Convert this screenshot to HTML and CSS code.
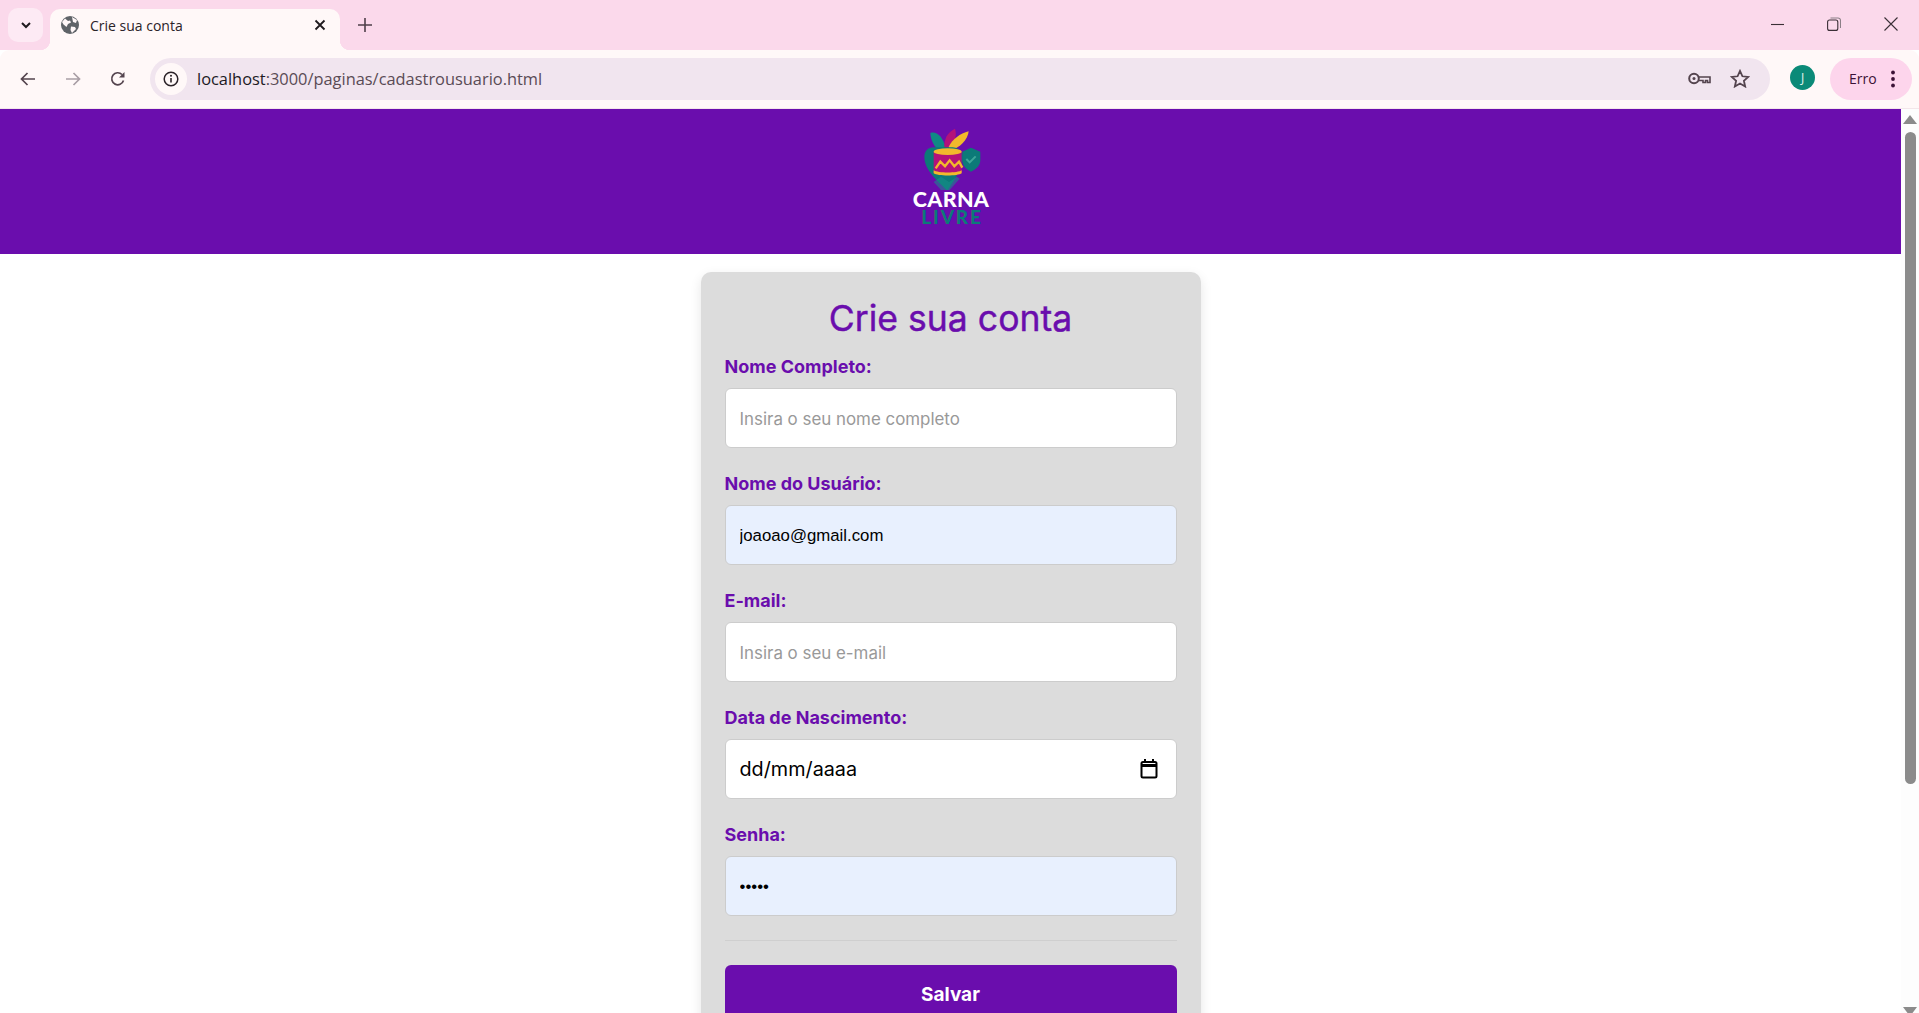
FILE: index.html
```html
<!DOCTYPE html>
<html lang="pt-BR">
<head>
<meta charset="utf-8">
<title>Crie sua conta</title>
<link rel="stylesheet" href="styles.css">
</head>
<body>
<div class="browser">
  <div class="tabstrip">
    <button class="tabsearch"><svg width="12" height="12" viewBox="0 0 12 12"><path d="M2 4l4 4 4-4" fill="none" stroke="#1f1a1e" stroke-width="2"/></svg></button>
    <div class="tab">
      <svg class="favicon" width="18" height="18" viewBox="0 0 18 18"><circle cx="9" cy="9" r="9" fill="#5f6368"/><path d="M4 2.500l3 2.500 2-.5 1 2-3 1.500-1.500 3-3-2.500L1 6zM11 1l5 3-1 3-3-1zM10 10.500l4 .5 1 2-4 4-1.500-3z" fill="#fff7f8"/></svg>
      <span class="tabtitle">Crie sua conta</span>
      <svg class="tabclose" width="12" height="12" viewBox="0 0 12 12"><path d="M1.500 1.500l9 9m0-9l-9 9" stroke="#1f1a1e" stroke-width="1.800"/></svg>
    </div>
    <svg class="newtab" width="14" height="14" viewBox="0 0 14 14"><path d="M7 0v14M0 7h14" stroke="#4f3f4a" stroke-width="1.600"/></svg>
    <div class="winctl">
      <svg width="13" height="13" viewBox="0 0 13 13"><path d="M0 6.500h13" stroke="#3a2f36" stroke-width="1.100"/></svg>
      <svg width="14" height="14" viewBox="0 0 14 14"><rect x=".6" y="3" width="10.200" height="10.400" rx="2" fill="none" stroke="#3a2f36" stroke-width="1.100"/><path d="M3.500 1h7.500a2.500 2.500 0 0 1 2.500 2.500v7.500" fill="none" stroke="#8c8087" stroke-width="1.100"/></svg>
      <svg width="14" height="14" viewBox="0 0 14 14"><path d="M.5.500l13 13m0-13l-13 13" stroke="#3a2f36" stroke-width="1.100"/></svg>
    </div>
  </div>
  <div class="toolbar">
    <svg class="navicon back" width="16" height="14" viewBox="0 0 16 14"><path d="M15 7H2M7.500 1L1.500 7l6 6" fill="none" stroke="#54444e" stroke-width="1.700"/></svg>
    <svg class="navicon fwd" width="16" height="14" viewBox="0 0 16 14"><path d="M1 7h13M8.500 1l6 6-6 6" fill="none" stroke="#a99ea5" stroke-width="1.700"/></svg>
    <svg class="navicon reload" width="16" height="16" viewBox="0 0 16 16"><path d="M13.500 9.500A6 6 0 1 1 12 3.500" fill="none" stroke="#54444e" stroke-width="1.700"/><path d="M14.500 1v5.500H9z" fill="#54444e"/></svg>
    <div class="omnibox">
      <span class="chip"><svg width="16" height="16" viewBox="0 0 16 16"><circle cx="8" cy="8" r="6.800" fill="none" stroke="#2b2228" stroke-width="1.500"/><path d="M8 7v4.500" stroke="#2b2228" stroke-width="1.600"/><circle cx="8" cy="4.800" r="1" fill="#2b2228"/></svg></span>
      <span class="url"><span class="urlhost">localhost</span>:3000/paginas/cadastrousuario.html</span>
      <svg class="key" width="23" height="13" viewBox="0 0 23 13"><circle cx="6" cy="6.500" r="4.800" fill="none" stroke="#54444e" stroke-width="2"/><circle cx="6" cy="6.500" r="1.500" fill="#54444e"/><path d="M11 5h11v5.500h-2.500v-2h-2v2H15v-2h-4" fill="none" stroke="#54444e" stroke-width="1.600"/></svg>
      <svg class="star" width="20" height="19" viewBox="0 0 19 18"><path d="M9.500 1.800l2.300 5.100 5.500.6-4.100 3.700 1.200 5.400-4.900-2.800-4.900 2.800 1.200-5.400L1.700 7.500l5.500-.6z" fill="none" stroke="#54444e" stroke-width="1.700"/></svg>
    </div>
    <span class="avatar">J</span>
    <div class="errorpill"><span>Erro</span><svg width="4" height="18" viewBox="0 0 4 18"><circle cx="2" cy="2.500" r="1.900" fill="#3c1236"/><circle cx="2" cy="9" r="1.900" fill="#3c1236"/><circle cx="2" cy="15.500" r="1.900" fill="#3c1236"/></svg></div>
  </div>
  <div class="viewport">
    <div class="page">
      <header class="siteheader">
        <div class="logo">
          <svg class="logomark" width="120" height="76" viewBox="0 0 360 228">
            <path d="M118 54c18-6 36 8 47 46l-20 8c-16-14-26-32-27-54z" fill="#0f8a84"/>
            <path d="M192 41c6 18 2 40-20 62l-12-6c-2-24 10-46 32-56z" fill="#b3127a"/>
            <path d="M233 49c-2 24-26 50-56 58l-4-12c12-22 34-40 60-46z" fill="#f2b92c"/>
            <path d="M100 125c0-18 14-30 30-28h55c10 0 30 8 30 30 0 34-25 68-44 98h-4c-24-26-67-58-67-100z" fill="#0c7a78"/>
            <path d="M150 225l-22-24 22-16 24 16 24-16 8 6-30 34z" fill="#15908a" opacity=".55"/>
            <path d="M240 98l28 12v26c0 16-14 28-28 34-14-6-26-18-26-34v-26z" fill="#0c7a78"/>
            <path d="M226 132l10 10 18-18" fill="none" stroke="#3ea79a" stroke-width="6"/>
            <path d="M128 110c8-8 76-8 84 0v64c-12 8-72 8-84 0z" fill="#b3127a"/>
            <ellipse cx="170" cy="110" rx="42" ry="10" fill="#f2b92c"/>
            <path d="M134 160l14-20 14 14 14-18 14 18 14-14 10 18" fill="none" stroke="#f2b92c" stroke-width="7"/>
            <path d="M128 166c12 9 72 9 84 0v9c-12 9-72 9-84 0z" fill="#f2b92c"/>
          </svg>
          <span class="logocarna">CARNA</span>
          <span class="logolivre">LIVRE</span>
        </div>
      </header>
      <main class="card">
        <h1 class="title">Crie sua conta</h1>
        <form>
          <div class="field">
            <label class="fieldlabel">Nome Completo:</label>
            <input class="input" type="text" placeholder="Insira o seu nome completo">
          </div>
          <div class="field">
            <label class="fieldlabel">Nome do Usuário:</label>
            <input class="input autofill" type="text" value="joaoao@gmail.com">
          </div>
          <div class="field">
            <label class="fieldlabel">E-mail:</label>
            <input class="input" type="text" placeholder="Insira o seu e-mail">
          </div>
          <div class="field">
            <label class="fieldlabel">Data de Nascimento:</label>
            <div class="datewrap">
              <input class="input dateinput" type="text" value="dd/mm/aaaa">
              <svg class="calendar" width="18" height="20" viewBox="0 0 18 20"><path d="M5 0v3M13 0v3" stroke="#000" stroke-width="2"/><rect x="1.500" y="3" width="15" height="15.500" rx="1.500" fill="none" stroke="#000" stroke-width="2"/><path d="M1 6.500h16" stroke="#000" stroke-width="3"/></svg>
            </div>
          </div>
          <div class="field">
            <label class="fieldlabel">Senha:</label>
            <input class="input autofill password" type="password" value="12345">
          </div>
          <hr class="divider">
          <button class="save" type="button">Salvar</button>
        </form>
      </main>
    </div>
    <div class="scrollbar">
      <svg class="arrow" width="14" height="9" viewBox="0 0 14 9"><path d="M7 0l7 9H0z" fill="#8b8b8b"/></svg>
      <div class="thumb"></div>
      <svg class="arrow" width="14" height="6" viewBox="0 0 14 6"><path d="M0 0h14l-4.500 6h-5z" fill="#8b8b8b"/></svg>
    </div>
  </div>
</div>
</body>
</html>
```
FILE: styles.css
```css
* { box-sizing: border-box; }
html, body { margin: 0; height: 1013px; overflow: hidden; background: #fff; }
.browser { display: flex; flex-direction: column; height: 1013px; font-family: "Open Sans", "Noto Sans", sans-serif; }

.tabstrip { height: 50px; flex: none; background: #fbd9eb; display: flex; align-items: flex-start; }
.tabsearch { width: 35px; height: 34px; margin: 8px 7px 0 8px; padding: 0; border: 0; border-radius: 10px; background: #fdeaf4; display: flex; align-items: center; justify-content: center; }
.tab { position: relative; width: 290px; height: 41px; margin-top: 9px; padding: 0 14px 0 11px; background: #fff8f8; border-radius: 10px 10px 0 0; display: flex; align-items: center; }
.tab::before, .tab::after { content: ""; position: absolute; bottom: 0; width: 10px; height: 10px; }
.tab::before { left: -10px; background: radial-gradient(circle at 0 0, transparent 10px, #fff8f8 10.500px); }
.tab::after { right: -10px; background: radial-gradient(circle at 100% 0, transparent 10px, #fff8f8 10.500px); }
.favicon { flex: none; margin-top: -9px; }
.tabtitle { margin-left: 11px; margin-top: -9px; font-size: 14px; color: #2a2328; flex: 1; }
.tabclose { margin-top: -9px; flex: none; }
.newtab { margin: 18px 0 0 18px; flex: none; }
.winctl { margin-left: auto; padding: 17px 21px 0 0; display: flex; gap: 43px; align-items: center; }
.winctl svg { flex: none; }

.toolbar { height: 59px; flex: none; background: #fff8f8; border-radius: 9px 9px 0 0; border-bottom: 1px solid #f3e6ea; display: flex; align-items: center; padding: 0 7px 1px 0; }
.navicon { flex: none; }
.back { margin-left: 20px; }
.fwd { margin-left: 29px; }
.reload { margin-left: 29px; }
.omnibox { width: 1621px; height: 42px; margin-left: 24px; background: #f1e5ef; border-radius: 21px; display: flex; align-items: center; padding: 0 20px 0 5px; }
.chip { width: 32px; height: 32px; border-radius: 50%; background: #fff8f8; display: flex; align-items: center; justify-content: center; flex: none; }
.url { margin-left: 10px; font-size: 16.400px; color: #5a4b55; flex: 1; white-space: nowrap; }
.urlhost { color: #211a1f; }
.key { flex: none; margin-right: 19px; }
.star { flex: none; }
.avatar { width: 25px; height: 25px; border-radius: 50%; background: #0b8a78; color: #e6f5f1; font-size: 12px; display: flex; align-items: center; justify-content: center; margin-left: 20px; flex: none; margin-top: -3px; }
.errorpill { width: 82px; height: 42px; border-radius: 21px; background: #fdd5ec; margin-left: 15px; display: flex; align-items: center; padding-left: 19px; color: #3c1236; font-size: 14px; flex: none; }
.errorpill svg { margin-left: 14px; }

.viewport { height: 904px; flex: none; display: flex; overflow: hidden; }
.page { width: 1901px; flex: none; height: 904px; overflow: hidden; font-family: Inter, sans-serif; }
.siteheader { height: 145px; background: #6a0dad; display: flex; justify-content: center; padding-top: 6px; }
.logo { display: flex; flex-direction: column; align-items: center; width: 120px; }
.logomark { flex: none; }
.logocarna { font-family: Lato, Inter, sans-serif; font-weight: 900; font-size: 21.500px; line-height: 17px; color: #fff; letter-spacing: .3px; margin-left: 1px; }
.logolivre { font-family: Lato, Inter, sans-serif; font-weight: 900; font-size: 19px; line-height: 14px; color: #0c7a78; letter-spacing: 1.800px; margin: 2px 0 0 3px; }

.card { width: 500px; margin: 18px auto 0; padding: 25px 24px 24px; background: #dcdcdc; border-radius: 10px; box-shadow: 0 4px 12px rgba(0,0,0,.1); }
.title { margin: 0 0 15px; font-size: 35.600px; font-weight: 400; line-height: 44px; color: #6a0dad; text-align: center; -webkit-text-stroke: .4px #6a0dad; }
.field { margin-bottom: 25px; }
.fieldlabel { display: block; font-size: 18px; font-weight: 700; line-height: 21px; color: #6a0dad; margin-bottom: 11px; }
.input { display: block; width: 100%; height: 60px; padding: 2px 14px 0; border: 1px solid #ccc; border-radius: 6px; background: #fff; font-family: Inter, sans-serif; font-size: 16.900px; color: #000; outline: 0; }
.input::placeholder { color: #999; }
.autofill { background: #e8f0fe; font-family: "Liberation Sans", sans-serif; font-size: 16.800px; }
.dateinput { font-size: 19.800px; padding-top: 0; }
.datewrap { position: relative; }
.calendar { position: absolute; right: 19px; top: 20px; }
.divider { margin: -1px 0 24px; height: 1px; border: 0; background: #cfcfcf; }
.save { display: block; width: 100%; height: 59px; padding: 0; border: 0; border-radius: 6px; background: #6a0dad; color: #fff; font-family: Inter, sans-serif; font-size: 19px; font-weight: 700; }

.scrollbar { width: 18px; flex: none; background: #fdfdfd; display: flex; flex-direction: column; align-items: center; }
.arrow { flex: none; }
.scrollbar .arrow:first-child { margin-top: 6px; }
.thumb { width: 11px; height: 652px; border-radius: 6px; background: #8b8b8b; margin: 8px 0 auto; }
```
